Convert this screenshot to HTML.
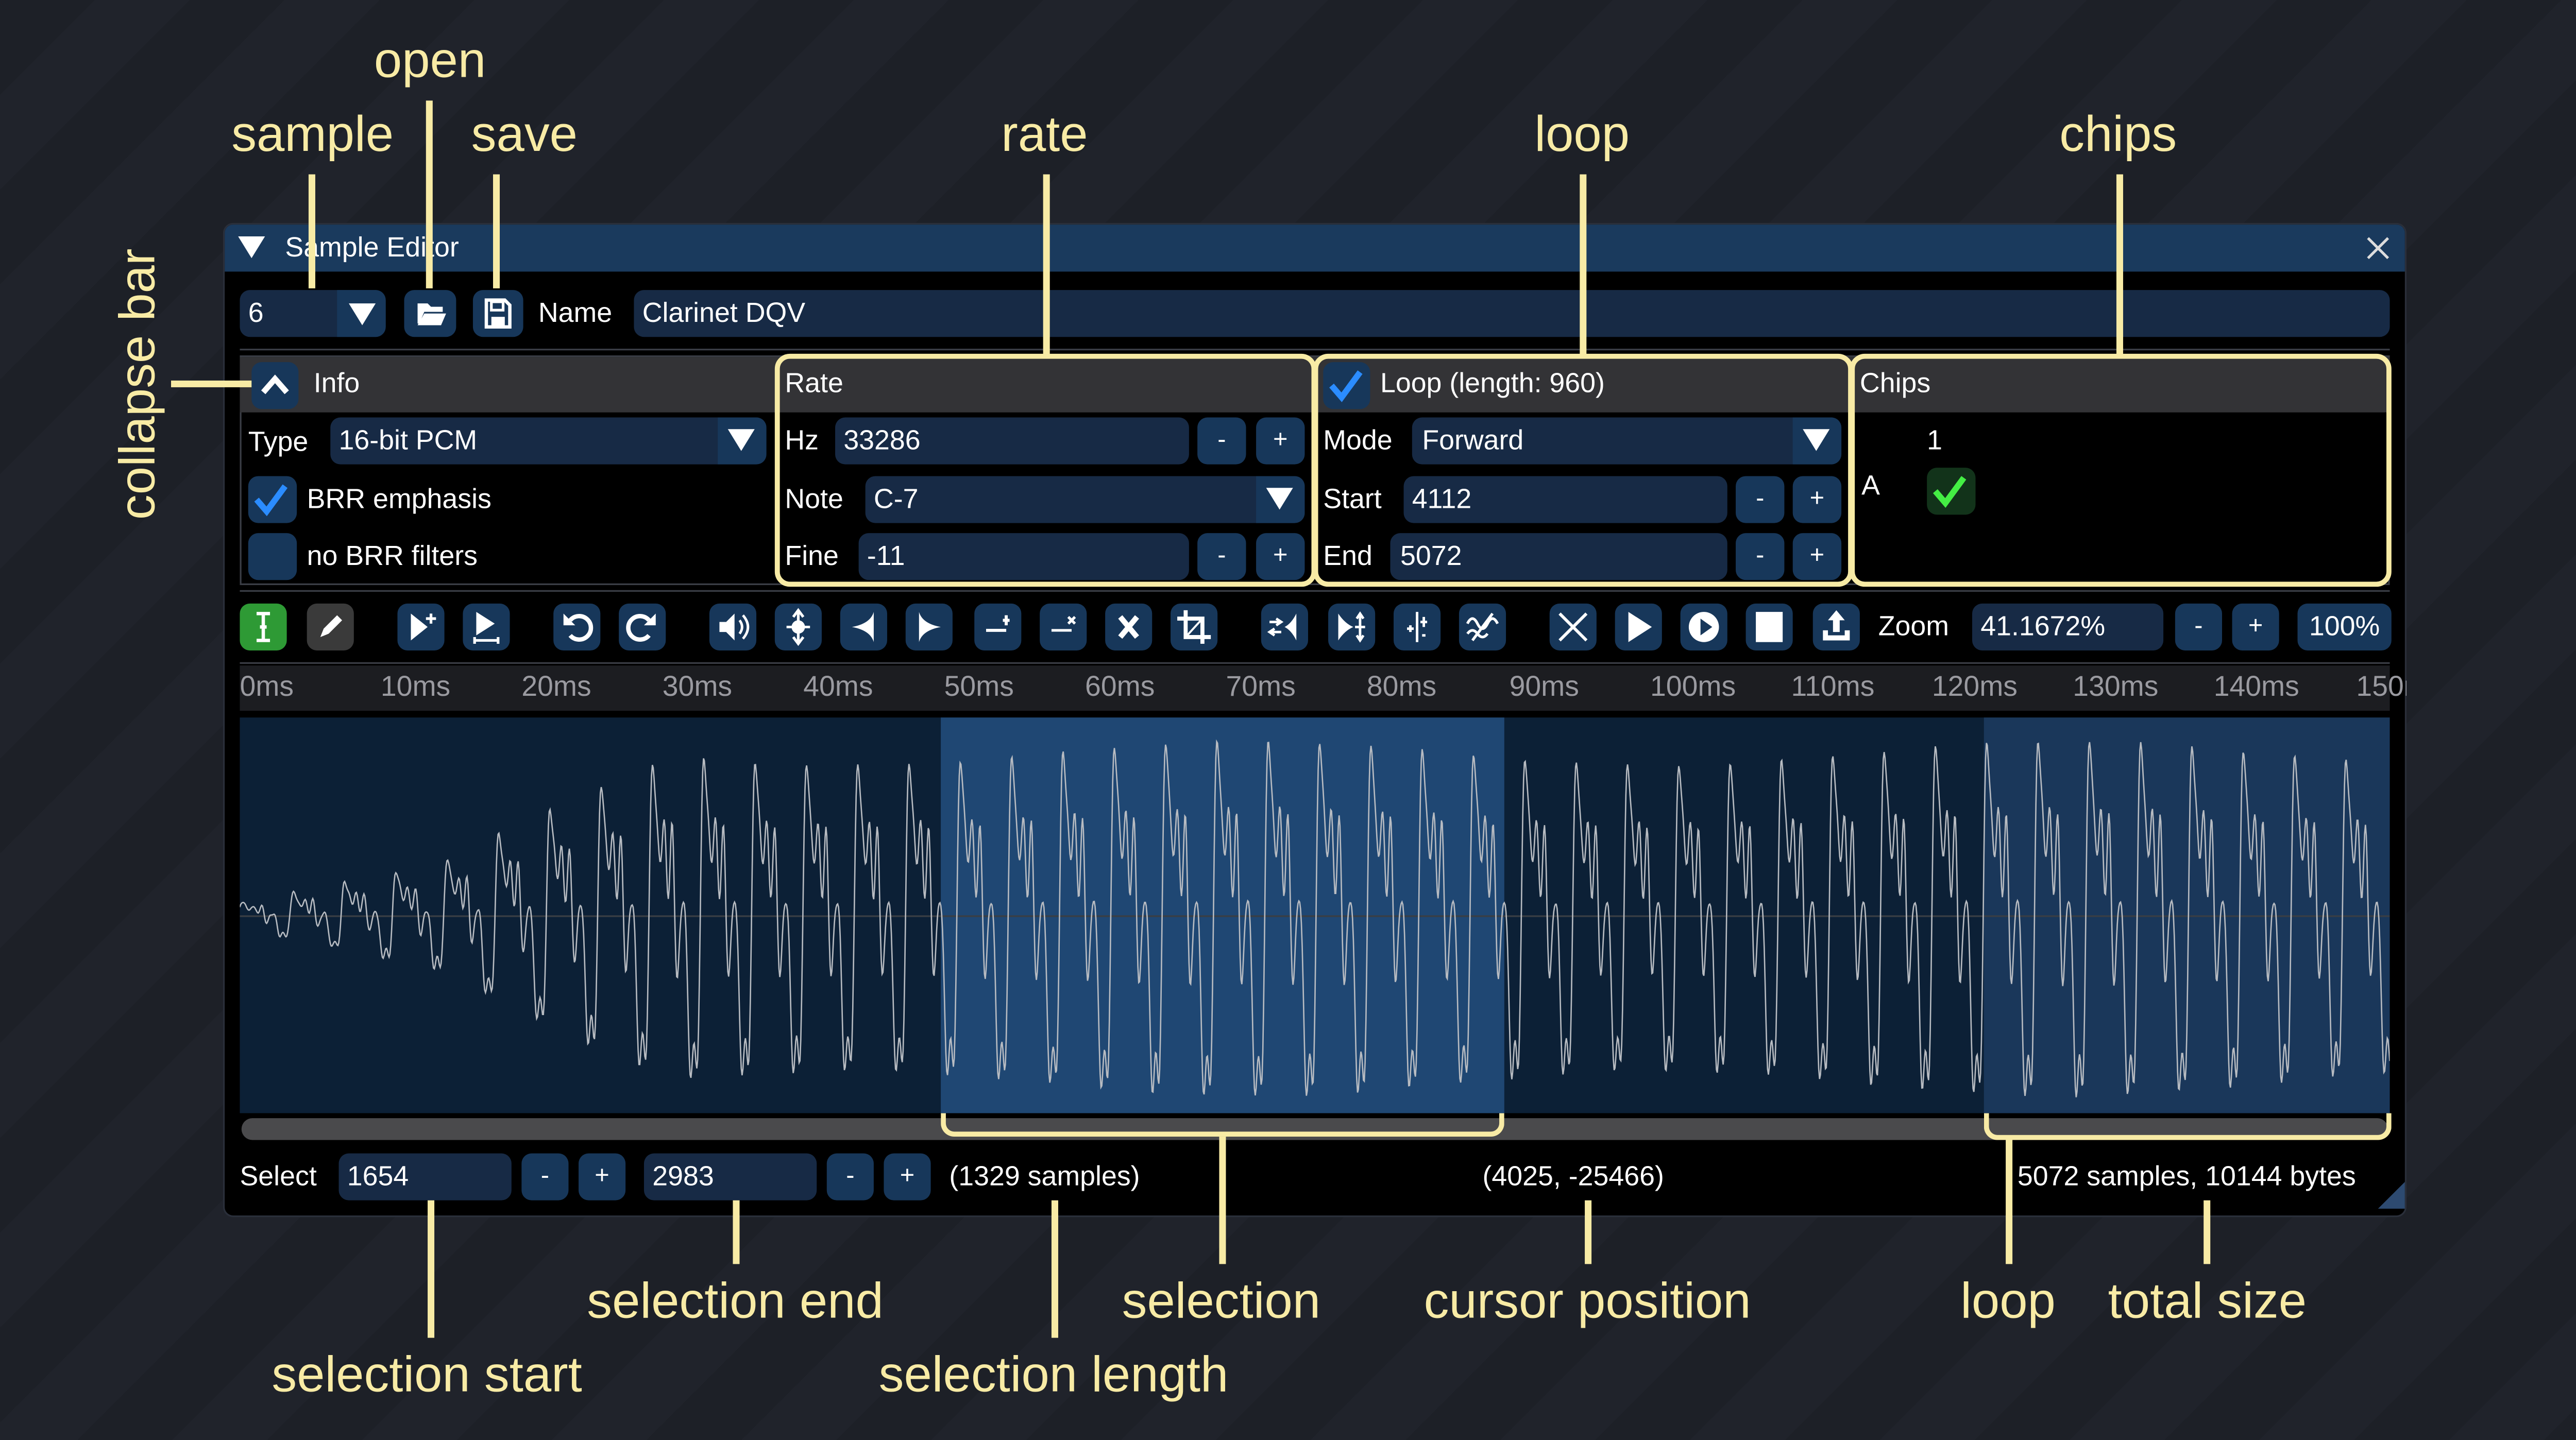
<!DOCTYPE html>
<html><head><meta charset="utf-8">
<style>
html,body{margin:0;padding:0;width:5104px;height:2796px;overflow:hidden;background:#1c1f26;}
#s{position:absolute;left:0;top:0;width:1568px;height:859px;transform:scale(3.2551);transform-origin:0 0;overflow:hidden;
background:repeating-linear-gradient(135deg,#1d2027 0px,#1d2027 40px,#20232b 40px,#20232b 80px);
font-family:"Liberation Sans",sans-serif;color:#fff;}
.a{position:absolute;}
.t{font-size:16.5px;line-height:28px;white-space:nowrap;}
.in{background:#172a45;border-radius:6px;height:28px;}
.bt{background:#17375a;border-radius:6px;height:28px;text-align:center;font-size:15px;line-height:28px;}
.y{color:#f8eba5;font-size:30px;line-height:34px;white-space:nowrap;}
.yl{background:#f8eba5;}
.hd{background:#333336;}
.tb{position:absolute;top:360px;width:28px;height:28px;background:#17375a;border-radius:6px;}
.tb svg{width:28px;height:28px;display:block}
.rl{position:absolute;top:398px;font-size:17px;line-height:24px;color:#9a9aa0;}
.box{position:absolute;border:3px solid #f8eba5;border-radius:9px;box-sizing:border-box;}
</style></head><body>
<div id="s">
<div class="a" style="left:133px;top:133px;width:1302px;height:593px;background:#000;border-radius:6px;border:1px solid #2a2f3a;box-sizing:border-box;"></div>
<div class="a" style="left:134px;top:134px;width:1300px;height:28px;background:#1a3a5d;border-radius:5px 5px 0 0;"></div>
<div class="a" style="left:142px;top:141px;width:0;height:0;border-left:8px solid transparent;border-right:8px solid transparent;border-top:13px solid #fff;"></div>
<div class="a t" style="left:170px;top:134px;">Sample Editor</div>
<svg class="a" style="left:1410px;top:140px" width="16" height="16"><path d="M2 2L14 14M14 2L2 14" stroke="#ddd" stroke-width="1.6"/></svg>
<div class="a" style="left:1418px;top:705px;width:0;height:0;border-left:16px solid transparent;border-bottom:16px solid #2d4a70;"></div>

<div class="a in" style="left:143px;top:173px;width:87px;"></div>
<div class="a" style="left:201px;top:173px;width:29px;height:28px;background:#17375a;border-radius:0 6px 6px 0;"></div>
<div class="a" style="left:208px;top:181px;border-left:8px solid transparent;border-right:8px solid transparent;border-top:13px solid #fff;width:0;height:0"></div>
<div class="a t" style="left:148px;top:173px;">6</div>
<div class="a bt" style="left:241px;top:173px;width:31px;"><svg width="20" height="20" style="margin-top:4px" viewBox="0 0 20 20"><path d="M2 4h6l2 2h7v3H6L3 16H2z M6 10h13l-3 7H2z" fill="#fff"/></svg></div>
<div class="a bt" style="left:282px;top:173px;width:30px;"><svg width="20" height="20" style="margin-top:4px" viewBox="0 0 20 20"><path d="M3 2h11l3 3v13H3z" fill="none" stroke="#fff" stroke-width="2"/><rect x="6" y="3" width="7" height="5" fill="none" stroke="#fff" stroke-width="1.6"/><rect x="6" y="12" width="8" height="5" fill="#fff"/></svg></div>
<div class="a t" style="left:321px;top:173px;">Name</div>
<div class="a in" style="left:378px;top:173px;width:1047px;"></div>
<div class="a t" style="left:383px;top:173px;">Clarinet DQV</div>
<div class="a" style="left:143px;top:208px;width:1282px;height:1px;background:#3a3d45;"></div>

<div class="a" style="left:143px;top:212px;width:1282px;height:137px;border:1px solid #3a3d45;box-sizing:border-box;"></div>
<div class="a hd" style="left:143px;top:213px;width:1282px;height:33px;"></div>
<div class="a" style="left:150px;top:216px;width:28px;height:28px;background:#17375a;border-radius:6px;"><svg width="28" height="28"><path d="M7 18L14 10L21 18" fill="none" stroke="#fff" stroke-width="3.4"/></svg></div>
<div class="a t" style="left:187px;top:215px;">Info</div>
<div class="a t" style="left:148px;top:250px;">Type</div>
<div class="a in" style="left:197px;top:249px;width:260px;"></div>
<div class="a" style="left:428px;top:249px;width:29px;height:28px;background:#17375a;border-radius:0 6px 6px 0;"></div>
<div class="a" style="left:434px;top:256px;border-left:8px solid transparent;border-right:8px solid transparent;border-top:13px solid #fff;width:0;height:0"></div>
<div class="a t" style="left:202px;top:249px;">16-bit PCM</div>
<div class="a" style="left:148px;top:284px;width:29px;height:28px;background:#17375a;border-radius:6px;"><svg width="29" height="28"><path d="M5 14L11 21L22 6" fill="none" stroke="#2b8cff" stroke-width="3.6"/></svg></div>
<div class="a t" style="left:183px;top:284px;">BRR emphasis</div>
<div class="a" style="left:148px;top:318px;width:29px;height:28px;background:#17375a;border-radius:6px;"></div>
<div class="a t" style="left:183px;top:318px;">no BRR filters</div>

<div class="a t" style="left:468px;top:215px;">Rate</div>
<div class="a t" style="left:468px;top:249px;">Hz</div>
<div class="a in" style="left:498px;top:249px;width:211px;"></div><div class="a t" style="left:503px;top:249px;">33286</div>
<div class="a bt" style="left:714px;top:249px;width:29px;">-</div><div class="a bt" style="left:749px;top:249px;width:29px;">+</div>
<div class="a t" style="left:468px;top:284px;">Note</div>
<div class="a in" style="left:516px;top:284px;width:262px;"></div>
<div class="a" style="left:749px;top:284px;width:29px;height:28px;background:#17375a;border-radius:0 6px 6px 0;"></div>
<div class="a" style="left:755px;top:291px;border-left:8px solid transparent;border-right:8px solid transparent;border-top:13px solid #fff;width:0;height:0"></div>
<div class="a t" style="left:521px;top:284px;">C-7</div>
<div class="a t" style="left:468px;top:318px;">Fine</div>
<div class="a in" style="left:512px;top:318px;width:197px;"></div><div class="a t" style="left:517px;top:318px;">-11</div>
<div class="a bt" style="left:714px;top:318px;width:29px;">-</div><div class="a bt" style="left:749px;top:318px;width:29px;">+</div>

<div class="a" style="left:789px;top:216px;width:28px;height:28px;background:#17375a;border-radius:6px;"><svg width="28" height="28"><path d="M5 14L11 21L22 6" fill="none" stroke="#2b8cff" stroke-width="3.6"/></svg></div>
<div class="a t" style="left:823px;top:215px;">Loop (length: 960)</div>
<div class="a t" style="left:789px;top:249px;">Mode</div>
<div class="a in" style="left:842px;top:249px;width:256px;"></div>
<div class="a" style="left:1069px;top:249px;width:29px;height:28px;background:#17375a;border-radius:0 6px 6px 0;"></div>
<div class="a" style="left:1075px;top:256px;border-left:8px solid transparent;border-right:8px solid transparent;border-top:13px solid #fff;width:0;height:0"></div>
<div class="a t" style="left:848px;top:249px;">Forward</div>
<div class="a t" style="left:789px;top:284px;">Start</div>
<div class="a in" style="left:837px;top:284px;width:193px;"></div><div class="a t" style="left:842px;top:284px;">4112</div>
<div class="a bt" style="left:1035px;top:284px;width:29px;">-</div><div class="a bt" style="left:1069px;top:284px;width:29px;">+</div>
<div class="a t" style="left:789px;top:318px;">End</div>
<div class="a in" style="left:829px;top:318px;width:201px;"></div><div class="a t" style="left:835px;top:318px;">5072</div>
<div class="a bt" style="left:1035px;top:318px;width:29px;">-</div><div class="a bt" style="left:1069px;top:318px;width:29px;">+</div>

<div class="a t" style="left:1109px;top:215px;">Chips</div>
<div class="a t" style="left:1149px;top:249px;">1</div>
<div class="a t" style="left:1110px;top:276px;">A</div>
<div class="a" style="left:1149px;top:279px;width:29px;height:28px;background:#12331a;border-radius:6px;"><svg width="29" height="28"><path d="M5 14L11 21L22 6" fill="none" stroke="#44ee44" stroke-width="3.6"/></svg></div>

<div class="box" style="left:462px;top:211px;width:323px;height:139px;"></div>
<div class="box" style="left:783px;top:211px;width:322px;height:139px;"></div>
<div class="box" style="left:1103px;top:211px;width:323px;height:139px;"></div>

<div class="a" style="left:143px;top:352px;width:1282px;height:1px;background:#3a3d45;"></div>
<div class="tb" style="left:143px;background:#2e9a35;"><svg viewBox="0 0 28 28"><path d="M10 6h8M10 22h8M14 6v16M12 14h4" stroke="#fff" stroke-width="2"/></svg></div>
<div class="tb" style="left:183px;background:#3a3a3a;"><svg viewBox="0 0 28 28"><path d="M8 20l2-5 8-8 3 3-8 8z" fill="#fff"/></svg></div>
<div class="tb" style="left:237px;"><svg viewBox="0 0 28 28"><path d="M8 6v16l10-8z" fill="#fff"/><path d="M20 6v6M17 9h6" stroke="#fff" stroke-width="1.6"/></svg></div>
<div class="tb" style="left:276px;"><svg viewBox="0 0 28 28"><path d="M8 5v14l11-7z" fill="#fff"/><path d="M7 22h14M7 20v4M21 20v4" stroke="#fff" stroke-width="1.6"/></svg></div>
<div class="tb" style="left:330px;"><svg viewBox="0 0 28 28"><path d="M10 10a7 7 0 1 1 0 9" fill="none" stroke="#fff" stroke-width="2.6"/><path d="M6 6v7h7z" fill="#fff"/></svg></div>
<div class="tb" style="left:369px;"><svg viewBox="0 0 28 28"><path d="M18 10a7 7 0 1 0 0 9" fill="none" stroke="#fff" stroke-width="2.6"/><path d="M22 6v7h-7z" fill="#fff"/></svg></div>
<div class="tb" style="left:423px;"><svg viewBox="0 0 28 28"><path d="M6 11h4l5-5v16l-5-5H6z" fill="#fff"/><path d="M18 10q3 4 0 8M20 7q6 7 0 14" fill="none" stroke="#fff" stroke-width="1.5"/></svg></div>
<div class="tb" style="left:462px;"><svg viewBox="0 0 28 28"><path d="M14 4v20M11 8l3-4 3 4M11 20l3 4 3-4" fill="none" stroke="#fff" stroke-width="1.6"/><circle cx="14" cy="14" r="4" fill="#fff"/><path d="M7 14h14" stroke="#fff" stroke-width="1.5"/></svg></div>
<div class="tb" style="left:501px;"><svg viewBox="0 0 28 28"><path d="M20 5Q18 12 7 14Q18 16 20 23z" fill="#fff"/></svg></div>
<div class="tb" style="left:540px;"><svg viewBox="0 0 28 28"><path d="M8 5Q10 12 21 14Q10 16 8 23z" fill="#fff"/></svg></div>
<div class="tb" style="left:581px;"><svg viewBox="0 0 28 28"><path d="M7 16h12M19 7v6M17 10h4" stroke="#fff" stroke-width="1.8"/></svg></div>
<div class="tb" style="left:620px;"><svg viewBox="0 0 28 28"><path d="M7 16h12M17 8l4 4M21 8l-4 4" stroke="#fff" stroke-width="1.6"/></svg></div>
<div class="tb" style="left:659px;"><svg viewBox="0 0 28 28"><path d="M9 8l10 12M19 8L9 20" stroke="#fff" stroke-width="3.2"/></svg></div>
<div class="tb" style="left:698px;"><svg viewBox="0 0 28 28"><path d="M9 4v16h15M4 9h15v15" fill="none" stroke="#fff" stroke-width="2.4"/><path d="M9 20L19 9" stroke="#fff" stroke-width="1.2"/></svg></div>
<div class="tb" style="left:752px;"><svg viewBox="0 0 28 28"><path d="M21 6Q18 12 14 14Q18 16 21 22z" fill="#fff"/><path d="M5 11h7M9 9l3 2-3 2M5 17h7M8 15l-3 2 3 2" fill="none" stroke="#fff" stroke-width="1.5"/></svg></div>
<div class="tb" style="left:792px;"><svg viewBox="0 0 28 28"><path d="M6 6Q10 12 15 14Q10 16 6 22z" fill="#fff"/><path d="M19 6v16M17 9l2-3 2 3M17 19l2 3 2-3M16 14h6" fill="none" stroke="#fff" stroke-width="1.5"/></svg></div>
<div class="tb" style="left:831px;"><svg viewBox="0 0 28 28"><path d="M14 5v18M18 8v6M16 11h4M8 15h4M10 13v4M17 19h2" stroke="#fff" stroke-width="1.5"/></svg></div>
<div class="tb" style="left:870px;"><svg viewBox="0 0 28 28"><path d="M5 12q3-6 6 0t6 0 6 0M5 18q3-4 6 0t6 0" fill="none" stroke="#fff" stroke-width="1.6"/><path d="M8 22L20 6" stroke="#fff" stroke-width="1.6"/></svg></div>
<div class="tb" style="left:924px;"><svg viewBox="0 0 28 28"><path d="M6 6q8 8 16 16M22 6q-8 8-16 16" fill="none" stroke="#fff" stroke-width="1.8"/></svg></div>
<div class="tb" style="left:963px;"><svg viewBox="0 0 28 28"><path d="M8 5v18l14-9z" fill="#fff"/></svg></div>
<div class="tb" style="left:1002px;"><svg viewBox="0 0 28 28"><circle cx="14" cy="14" r="9" fill="#fff"/><path d="M12 9v10l7-5z" fill="#17375a"/></svg></div>
<div class="tb" style="left:1041px;"><svg viewBox="0 0 28 28"><rect x="6" y="5" width="16" height="18" fill="#fff"/></svg></div>
<div class="tb" style="left:1081px;"><svg viewBox="0 0 28 28"><path d="M14 4l-5 6h3v7h4v-7h3z M6 16v6h16v-6h-3v3H9v-3z" fill="#fff"/></svg></div>
<div class="a t" style="left:1120px;top:360px;">Zoom</div>
<div class="a in" style="left:1176px;top:360px;width:114px;"></div><div class="a t" style="left:1181px;top:360px;">41.1672%</div>
<div class="a bt" style="left:1297px;top:360px;width:28px;">-</div>
<div class="a bt" style="left:1331px;top:360px;width:28px;">+</div>
<div class="a bt" style="left:1370px;top:360px;width:56px;font-size:16.5px;">100%</div>

<div class="a" style="left:143px;top:395px;width:1282px;height:1px;background:#3a3d45;"></div>
<div class="a" style="left:143px;top:397px;width:1282px;height:27px;background:#1c1d21;"></div>
<div class="rl" style="left:143px">0ms</div><div class="rl" style="left:227px">10ms</div><div class="rl" style="left:311px">20ms</div><div class="rl" style="left:395px">30ms</div><div class="rl" style="left:479px">40ms</div><div class="rl" style="left:563px">50ms</div><div class="rl" style="left:647px">60ms</div><div class="rl" style="left:731px">70ms</div><div class="rl" style="left:815px">80ms</div><div class="rl" style="left:900px">90ms</div><div class="rl" style="left:984px">100ms</div><div class="rl" style="left:1068px">110ms</div><div class="rl" style="left:1152px">120ms</div><div class="rl" style="left:1236px">130ms</div><div class="rl" style="left:1320px">140ms</div><div class="rl" style="left:1405px;width:30px;overflow:hidden">150ms</div>

<div class="a" style="left:143px;top:428px;width:1282px;height:236px;background:#0c2036;"></div>
<div class="a" style="left:1183px;top:428px;width:242px;height:236px;background:#1a375a;"></div>
<div class="a" style="left:561px;top:428px;width:336px;height:236px;background:#1f4773;"></div>
<div class="a" style="left:143px;top:546px;width:1282px;height:1px;background:#3a3e44;"></div>
<svg id="wv" class="a" style="left:143px;top:428px" width="1282" height="236"><path id="wp" d="" fill="none" stroke="#b8bcc2" stroke-width="0.8"/></svg>
<div class="a" style="left:144px;top:667px;width:1280px;height:13px;background:#4a4a4c;border-radius:7px;"></div>

<div class="a t" style="left:143px;top:688px;">Select</div>
<div class="a in" style="left:202px;top:688px;width:103px;"></div><div class="a t" style="left:207px;top:688px;">1654</div>
<div class="a bt" style="left:311px;top:688px;width:28px;">-</div><div class="a bt" style="left:345px;top:688px;width:28px;">+</div>
<div class="a in" style="left:384px;top:688px;width:103px;"></div><div class="a t" style="left:389px;top:688px;">2983</div>
<div class="a bt" style="left:493px;top:688px;width:28px;">-</div><div class="a bt" style="left:527px;top:688px;width:28px;">+</div>
<div class="a t" style="left:566px;top:688px;">(1329 samples)</div>
<div class="a t" style="left:884px;top:688px;">(4025, -25466)</div>
<div class="a t" style="left:1203px;top:688px;">5072 samples, 10144 bytes</div>

<div class="a y" style="left:138px;top:64px;">sample</div>
<div class="a y" style="left:223px;top:20px;">open</div>
<div class="a y" style="left:281px;top:64px;">save</div>
<div class="a y" style="left:597px;top:64px;">rate</div>
<div class="a y" style="left:915px;top:64px;">loop</div>
<div class="a y" style="left:1228px;top:64px;">chips</div>
<div class="a yl" style="left:184px;top:104px;width:4px;height:68px;"></div>
<div class="a yl" style="left:254px;top:60px;width:4px;height:112px;"></div>
<div class="a yl" style="left:294px;top:104px;width:4px;height:68px;"></div>
<div class="a yl" style="left:622px;top:104px;width:4px;height:108px;"></div>
<div class="a yl" style="left:942px;top:104px;width:4px;height:108px;"></div>
<div class="a yl" style="left:1262px;top:104px;width:4px;height:108px;"></div>
<div class="a y" style="left:66px;top:310px;transform:rotate(-90deg);transform-origin:0 0;">collapse bar</div>
<div class="a yl" style="left:102px;top:227px;width:48px;height:4px;"></div>

<div class="a" style="left:561px;top:664px;width:336px;height:14px;border:3px solid #f8eba5;border-top:none;border-radius:0 0 8px 8px;box-sizing:border-box;"></div>
<div class="a" style="left:1183px;top:664px;width:243px;height:16px;border:3px solid #f8eba5;border-top:none;border-radius:0 0 8px 8px;box-sizing:border-box;"></div>
<div class="a yl" style="left:255px;top:716px;width:4px;height:82px;"></div>
<div class="a yl" style="left:437px;top:716px;width:4px;height:38px;"></div>
<div class="a yl" style="left:627px;top:716px;width:4px;height:82px;"></div>
<div class="a yl" style="left:727px;top:678px;width:4px;height:76px;"></div>
<div class="a yl" style="left:945px;top:716px;width:4px;height:38px;"></div>
<div class="a yl" style="left:1196px;top:680px;width:4px;height:74px;"></div>
<div class="a yl" style="left:1314px;top:716px;width:4px;height:38px;"></div>
<div class="a y" style="left:162px;top:804px;">selection start</div>
<div class="a y" style="left:350px;top:760px;">selection end</div>
<div class="a y" style="left:524px;top:804px;">selection length</div>
<div class="a y" style="left:669px;top:760px;">selection</div>
<div class="a y" style="left:849px;top:760px;">cursor position</div>
<div class="a y" style="left:1169px;top:760px;">loop</div>
<div class="a y" style="left:1257px;top:760px;">total size</div>
</div>
<script>
(function(){
var P=30.6;
function f(x){var ph=2*Math.PI*x/P;
 return 0.6*Math.sin(ph)+0.35*Math.sin(2*ph+0.4)+0.3*Math.sin(3*ph+1.0)+0.22*Math.sin(5*ph+0.3)+0.12*Math.sin(7*ph+1.7);}
var mx=-9,mn=9;for(var i=0;i<P;i+=0.05){var q=f(i);if(q>mx)mx=q;if(q<mn)mn=q;}
var d="";
for(var x=0;x<=1282;x+=0.5){
 var env;
 if(x<120) env=0.08+0.22*x/120;
 else if(x<260) env=0.3+0.7*(x-120)/140;
 else env=1;
 env*=0.93+0.07*Math.sin(x*0.013);
 var v=f(x);
 var y=v>0?118-env*104*v/mx:118+env*108*v/mn;
 y+=0.6*Math.sin(x*1.7);
 d+=(x?"L":"M")+x.toFixed(1)+" "+y.toFixed(1);
}
document.getElementById("wp").setAttribute("d",d);
})();
</script>
</body></html>
